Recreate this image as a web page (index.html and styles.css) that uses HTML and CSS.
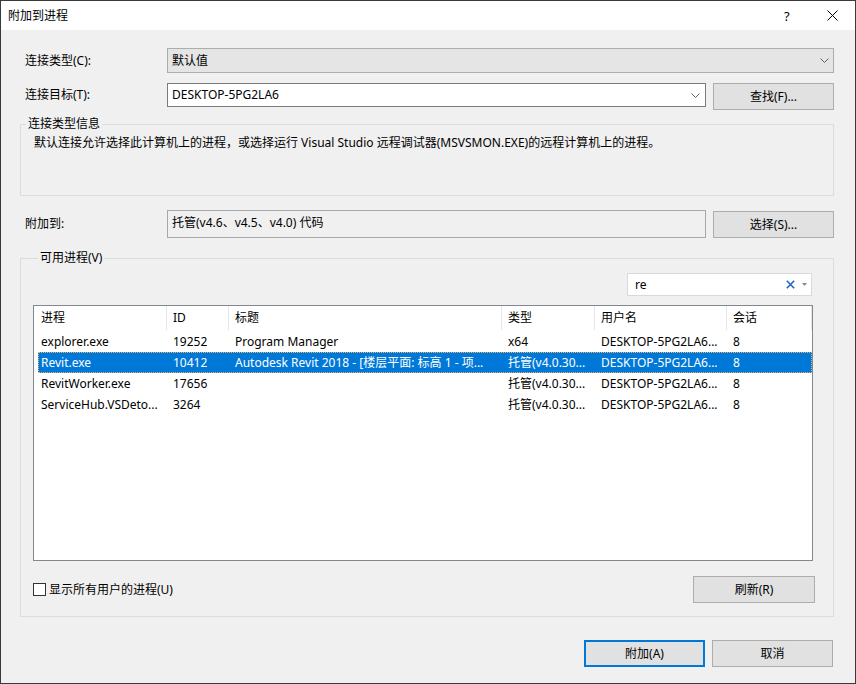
FILE: index.html
```html
<!DOCTYPE html>
<html lang="zh-CN">
<head>
    <meta charset="UTF-8">
    <title>附加到进程</title>
    <link rel="stylesheet" href="styles.css">
</head>
<body>
    <div class="dialog">
        <div class="titlebar">
            <span class="title">附加到进程</span>
            <span class="help">?</span>
            <span class="close">
                <svg width="11" height="11" viewBox="0 0 11 11"><path d="M0.5 0.5 L10.5 10.5 M10.5 0.5 L0.5 10.5" stroke="#000" stroke-width="1" fill="none"/></svg>
            </span>
        </div>

        <div class="content">
            <div class="row row-type">
                <label class="field-label">连接类型(C):</label>
                <div class="combo combo-readonly">
                    <span>默认值</span>
                    <svg class="chevron" width="9" height="5" viewBox="0 0 9 5"><path d="M0.5 0.5 L4.5 4.5 L8.5 0.5" stroke="#606060" fill="none"/></svg>
                </div>
            </div>

            <div class="row row-target">
                <label class="field-label">连接目标(T):</label>
                <div class="combo combo-edit">
                    <span>DESKTOP-5PG2LA6</span>
                    <svg class="chevron" width="9" height="5" viewBox="0 0 9 5"><path d="M0.5 0.5 L4.5 4.5 L8.5 0.5" stroke="#606060" fill="none"/></svg>
                </div>
                <button class="btn btn-side">查找(F)...</button>
            </div>

            <fieldset class="group group-info">
                <legend>连接类型信息</legend>
                <p class="info-text">默认连接允许选择此计算机上的进程，或选择运行 Visual Studio 远程调试器(MSVSMON.EXE)的远程计算机上的进程。</p>
            </fieldset>

            <div class="row row-attach">
                <label class="field-label">附加到:</label>
                <div class="readonly-box">托管(v4.6、v4.5、v4.0) 代码</div>
                <button class="btn btn-side">选择(S)...</button>
            </div>

            <fieldset class="group group-procs">
                <legend>可用进程(V)</legend>

                <div class="search-row">
                    <div class="search">
                        <span class="search-text">re</span>
                        <svg class="search-clear" width="9" height="9" viewBox="0 0 9 9"><path d="M0.8 0.8 L8.2 8.2 M8.2 0.8 L0.8 8.2" stroke="#1f68b8" stroke-width="1.6" fill="none"/></svg>
                        <svg class="search-drop" width="5" height="3" viewBox="0 0 5 3"><path d="M0 0 L5 0 L2.5 3 Z" fill="#8a8a8a"/></svg>
                    </div>
                </div>

                <div class="list">
                    <div class="list-head">
                        <div>进程</div>
                        <div>ID</div>
                        <div>标题</div>
                        <div>类型</div>
                        <div>用户名</div>
                        <div>会话</div>
                    </div>
                    <div class="list-row">
                        <div>explorer.exe</div>
                        <div>19252</div>
                        <div>Program Manager</div>
                        <div>x64</div>
                        <div>DESKTOP-5PG2LA6...</div>
                        <div>8</div>
                    </div>
                    <div class="list-row selected">
                        <div>Revit.exe</div>
                        <div>10412</div>
                        <div>Autodesk Revit 2018 - [楼层平面: 标高 1 - 项...</div>
                        <div>托管(v4.0.30...</div>
                        <div>DESKTOP-5PG2LA6...</div>
                        <div>8</div>
                    </div>
                    <div class="list-row">
                        <div>RevitWorker.exe</div>
                        <div>17656</div>
                        <div></div>
                        <div>托管(v4.0.30...</div>
                        <div>DESKTOP-5PG2LA6...</div>
                        <div>8</div>
                    </div>
                    <div class="list-row">
                        <div>ServiceHub.VSDeto...</div>
                        <div>3264</div>
                        <div></div>
                        <div>托管(v4.0.30...</div>
                        <div>DESKTOP-5PG2LA6...</div>
                        <div>8</div>
                    </div>
                </div>

                <div class="list-footer">
                    <label class="check"><span class="check-box"></span>显示所有用户的进程(U)</label>
                    <button class="btn btn-refresh">刷新(R)</button>
                </div>
            </fieldset>

            <div class="dialog-buttons">
                <button class="btn btn-default">附加(A)</button>
                <button class="btn">取消</button>
            </div>
        </div>
    </div>
</body>
</html>
```

FILE: styles.css
```css
* {
    margin: 0;
    padding: 0;
    box-sizing: border-box;
}

body {
    background: #f0f0f0;
    font-family: "Noto Sans", "Noto Sans CJK SC", sans-serif;
    font-size: 12px;
    color: #000;
}

.dialog {
    width: 856px;
    height: 684px;
    border: 1px solid #3a3a3a;
    background: #f0f0f0;
    overflow: hidden;
}

.titlebar {
    height: 29px;
    background: #fff;
    display: flex;
    align-items: center;
    padding-left: 7px;
}

.title {
    flex: 1;
    line-height: 16px;
}

.help {
    width: 10px;
    font-size: 13px;
    line-height: 16px;
    margin-right: 33px;
}

.close {
    display: flex;
    width: 11px;
    height: 11px;
    margin-right: 17px;
}

.content {
    padding: 0 21px 0 19px;
}

.row {
    display: flex;
    align-items: center;
}

.field-label {
    width: 147px;
    padding-left: 5px;
    line-height: 16px;
    flex-shrink: 0;
}

.row-type {
    margin-top: 18px;
    height: 25px;
}

.combo {
    display: flex;
    align-items: center;
    justify-content: space-between;
    padding: 0 5px 0 4px;
    line-height: 16px;
}

.combo-readonly {
    flex: 1;
    height: 25px;
    background: #e5e5e5;
    border: 1px solid #adadad;
    padding-right: 4px;
}

.row-target {
    margin-top: 10px;
    align-items: flex-start;
}

.row-target .field-label {
    margin-top: 4px;
}

.combo-edit {
    width: 539px;
    height: 24px;
    background: #fff;
    border: 1px solid #7a7a7a;
    padding-right: 5px;
}

.btn {
    font-family: inherit;
    font-size: 12px;
    line-height: 16px;
    color: #000;
    background: #e1e1e1;
    border: 1px solid #adadad;
    height: 27px;
    width: 122px;
}

.btn-side {
    margin-left: 7px;
    width: 121px;
}

.group {
    border: 1px solid #dcdcdc;
    min-width: 0;
}

.group legend {
    margin-left: 5px;
    padding: 0 2px;
    line-height: 16px;
}

.group-info {
    margin-top: 6px;
}

.info-text {
    height: 63px;
    padding: 3px 0 0 13px;
    line-height: 16px;
}

.row-attach {
    margin-top: 14px;
    align-items: flex-start;
}

.row-attach .field-label {
    margin-top: 6px;
}

.readonly-box {
    width: 539px;
    height: 28px;
    border: 1px solid #a8a8a8;
    padding: 4px 0 0 4px;
    line-height: 16px;
}

.row-attach .btn {
    margin-top: 1px;
}

.group-procs {
    margin-top: 12px;
    padding: 0 20px 13px 12px;
}

.search-row {
    display: flex;
    justify-content: flex-end;
    margin-top: 7px;
    padding-right: 1px;
}

.search {
    width: 185px;
    height: 23px;
    background: #fff;
    border: 1px solid #d9d9d9;
    display: flex;
    align-items: center;
    padding-left: 7px;
}

.search-text {
    flex: 1;
    line-height: 16px;
}

.search-clear {
    margin-right: 7px;
}

.search-drop {
    margin-right: 4px;
}

.list {
    margin-top: 9px;
    height: 256px;
    background: #fff;
    border: 1px solid #828790;
}

.list-head,
.list-row {
    display: grid;
    grid-template-columns: 133px 62px 273px 93px 132px 85px;
}

.list-head {
    height: 24px;
    margin-bottom: 1px;
}

.list-head > div {
    border-right: 1px solid #e5e5e5;
    padding-left: 6px;
    line-height: 24px;
}

.list-head > div:first-child {
    padding-left: 7px;
}

.list-row {
    height: 21px;
    margin-left: 4px;
    grid-template-columns: 129px 62px 273px 93px 132px 85px;
}

.list-row > div {
    padding-left: 6px;
    line-height: 21px;
    white-space: nowrap;
    overflow: hidden;
}

.list-row > div:first-child {
    padding-left: 3px;
}

.list-row.selected {
    background: #0078d7;
    color: #fff;
    outline: 1px dotted #f2b46a;
    outline-offset: -1px;
}

.list-footer {
    display: flex;
    align-items: center;
    justify-content: space-between;
    margin-top: 15px;
    margin-right: -2px;
}

.check {
    display: flex;
    align-items: center;
    line-height: 16px;
}

.check-box {
    width: 13px;
    height: 13px;
    border: 1px solid #333;
    background: #fff;
    margin-right: 3px;
}

.btn-refresh {
    width: 122px;
}

.dialog-buttons {
    display: flex;
    justify-content: flex-end;
    gap: 7px;
    margin-top: 23px;
    margin-right: 1px;
}

.dialog-buttons .btn {
    width: 121px;
}

.btn-default {
    width: 122px;
    border: 2px solid #0078d7;
}
```
